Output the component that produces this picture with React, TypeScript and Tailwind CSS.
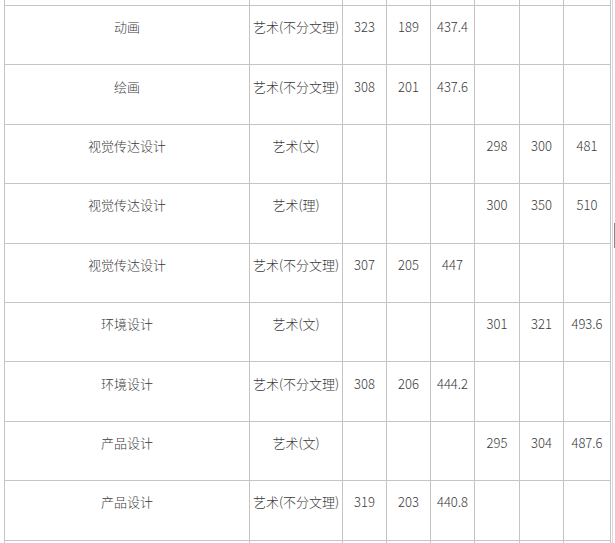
const rows: string[][] = [
  ['动画', '艺术(不分文理)', '323', '189', '437.4', '', '', ''],
  ['绘画', '艺术(不分文理)', '308', '201', '437.6', '', '', ''],
  ['视觉传达设计', '艺术(文)', '', '', '', '298', '300', '481'],
  ['视觉传达设计', '艺术(理)', '', '', '', '300', '350', '510'],
  ['视觉传达设计', '艺术(不分文理)', '307', '205', '447', '', '', ''],
  ['环境设计', '艺术(文)', '', '', '', '301', '321', '493.6'],
  ['环境设计', '艺术(不分文理)', '308', '206', '444.2', '', '', ''],
  ['产品设计', '艺术(文)', '', '', '', '295', '304', '487.6'],
  ['产品设计', '艺术(不分文理)', '319', '203', '440.8', '', '', ''],
];

const empty = ['', '', '', '', '', '', '', ''];

function Row({ cells, height, first }: { cells: string[]; height: string; first?: boolean }) {
  return (
    <div
      className={`grid grid-cols-[245px_93px_44px_44px_44px_45px_44px_47px] ${height} ${
        first ? '' : 'border-t border-[#c4c4c4]'
      }`}
    >
      {cells.map((c, i) => (
        <div
          key={i}
          className="flex items-center justify-center border-l border-[#c4c4c4] pb-[16px] whitespace-nowrap"
        >
          {c}
        </div>
      ))}
    </div>
  );
}

export default function App() {
  return (
    <div className="relative w-[615px] h-[543px] overflow-hidden bg-white text-[#3a3a3a] text-[13px] font-light leading-[20px] font-['Microsoft_YaHei','Noto_Sans_CJK_SC',sans-serif]">
      <div className="ml-[4px] w-[607px] border-r border-[#c4c4c4]">
        <Row cells={empty} height="h-[5px]" first />
        {rows.map((r, i) => (
          <Row key={i} cells={r} height="h-[59.4px]" />
        ))}
        <Row cells={empty} height="h-[40px]" />
      </div>
      {/* page edge / scrollbar */}
      <div className="absolute top-0 right-[2px] h-full w-px bg-[#d8d8d8]" />
      <div className="absolute top-[223px] right-0 h-[25px] w-px bg-[#888]" />
    </div>
  );
}
